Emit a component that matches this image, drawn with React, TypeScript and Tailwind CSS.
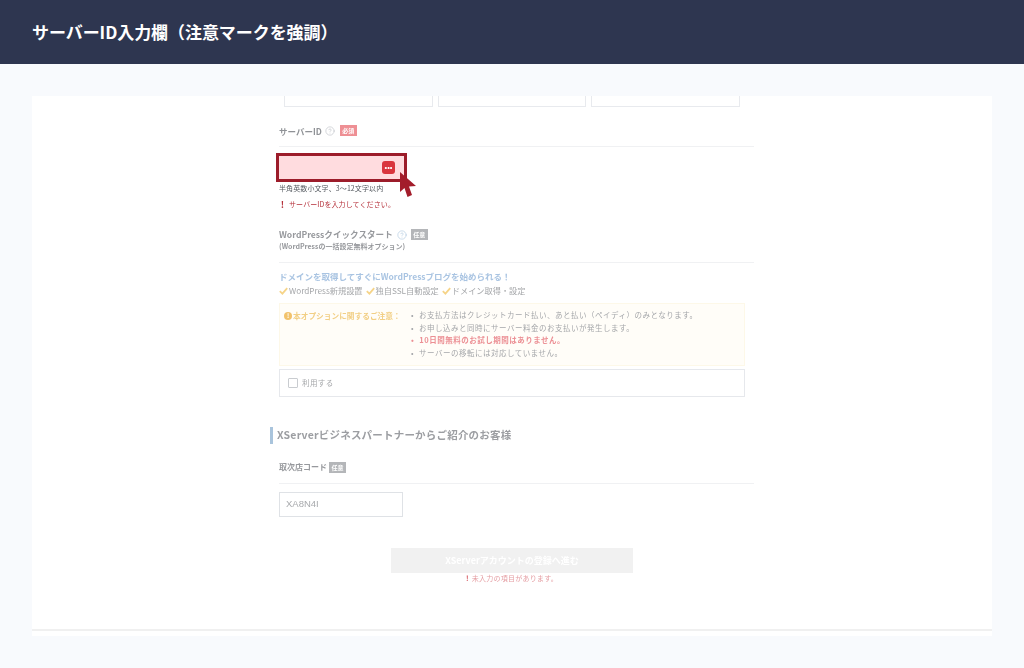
import { HelpCircle } from "lucide-react";

const cjk = "font-['Noto_Sans_CJK_JP','Noto_Sans',sans-serif]";

const Badge = ({ label, color }: { label: string; color: string }) => (
  <span className={`flex h-[11px] w-[17px] items-center justify-center text-[6px] font-bold leading-none text-white ${color}`}>
    {label}
  </span>
);

const Check = () => (
  <svg width="9" height="8" viewBox="0 0 9 8" className="mr-px inline-block">
    <path d="M0.8 4.2 L3.4 6.6 L8.2 1.2" fill="none" stroke="#f6d488" strokeWidth="1.8" />
  </svg>
);

const Alert = () => (
  <span className="w-[7px] text-center text-[9px] font-bold leading-none text-[#b5303a]">!</span>
);

const App = () => {
  return (
    <div className={`flex h-[668px] w-[1024px] flex-col overflow-hidden bg-[#f8fafd] ${cjk}`}>
      <header className="flex h-16 shrink-0 items-center bg-[#2e3650] pl-8">
        <h1 className="text-[17px] font-bold tracking-[-0.06px] text-white">サーバーID入力欄（注意マークを強調）</h1>
      </header>

      <main className="mx-8 mt-8 h-[540px] bg-white blur-[0.4px]">
        <div className="relative ml-[247px] h-[533px] w-[475px]">
          <div className="flex gap-[5px] pl-[5px]">
            <div className="h-[11px] w-[149px] border border-t-0 border-[#e8eaee]" />
            <div className="h-[11px] w-[148px] border border-t-0 border-[#e8eaee]" />
            <div className="h-[11px] w-[149px] border border-t-0 border-[#e8eaee]" />
          </div>

          <div className="mt-[15px] flex h-[25px] items-start gap-[3px] border-b border-[#f0f1f3]">
            <span className="text-[8.5px] font-bold leading-[18px] text-[#8f9296]">サーバーID</span>
            <HelpCircle size={10} className="mt-1 text-[#b8bcc2]" strokeWidth={1.4} />
            <span className="ml-[2px] mt-[3px]"><Badge label="必須" color="bg-[#ee8f94]" /></span>
          </div>

          <div className="relative ml-[-3px] mt-[6px] flex h-[29px] w-[131px] items-center justify-end border-[3px] border-[#9c1c2a] bg-[#ffdcdf] pr-[9px]">
            <span className="flex h-[13px] w-[13px] items-center justify-center rounded-[3px] bg-[#d9363e] text-[7px] font-bold leading-none text-white">•••</span>
            <svg width="18" height="26" viewBox="0 0 18 26" className="absolute left-[120px] top-[16px]">
              <path d="M1 0 L1 20 L5.5 16 L8.5 25 L13 23 L10 14.5 L17 14 Z" fill="#a31d2b" />
            </svg>
          </div>

          <p className="mt-px text-[7px] leading-[11px] tracking-[0.1px] text-[#555a60]">半角英数小文字、3〜12文字以内</p>
          <p className="mt-[5px] flex items-center gap-[3px] text-[7px] leading-[11px] tracking-[0.1px] text-[#b5303a]">
            <Alert />
            サーバーIDを入力してください。
          </p>

          <div className="mt-[18px] h-[35px] border-b border-[#f0f1f3]">
            <div className="flex h-[13px] items-center gap-[4px]">
              <span className="text-[8.6px] font-bold leading-none text-[#97999d]">WordPressクイックスタート</span>
              <HelpCircle size={10} className="text-[#a9c4dd]" strokeWidth={1.4} />
              <Badge label="任意" color="bg-[#b4b6b9]" />
            </div>
            <p className="text-[7px] font-bold leading-[11px] text-[#97999d]">(WordPressの一括設定無料オプション)</p>
          </div>

          <p className="mt-[7px] text-[8.5px] font-bold leading-[13px] text-[#a9c4e2]">ドメインを取得してすぐにWordPressブログを始められる！</p>
          <p className="mt-px flex items-center text-[8.2px] leading-[13px] text-[#a5a7aa]">
            <Check />WordPress新規設置
            <span className="w-[3px]" /><Check />独自SSL自動設定
            <span className="w-[3px]" /><Check />ドメイン取得・設定
          </p>

          <div className="mt-[6px] flex h-[63px] w-[466px] border border-[#fdf8e8] bg-[#fffdf8] pl-1 pt-[5px]">
            <p className="flex h-[13px] w-[127px] items-center gap-px text-[7.7px] font-bold leading-none text-[#f2cf85]">
              <span className="flex h-2 w-2 items-center justify-center rounded-full bg-[#f2c26b] text-[6px] text-white">!</span>
              本オプションに関するご注意：
            </p>
            <ul className="text-[7.5px] leading-[12.6px] tracking-[0.5px] text-[#a5a7aa]">
              <li className="flex gap-[5px]"><span>•</span>お支払方法はクレジットカード払い、あと払い（ペイディ）のみとなります。</li>
              <li className="flex gap-[5px]"><span>•</span>お申し込みと同時にサーバー料金のお支払いが発生します。</li>
              <li className="flex gap-[5px] font-bold text-[#ec8f94]"><span>•</span>10日間無料のお試し期間はありません。</li>
              <li className="flex gap-[5px]"><span>•</span>サーバーの移転には対応していません。</li>
            </ul>
          </div>

          <label className="mt-[3px] flex h-[28px] w-[466px] items-center gap-[4px] border border-[#e6e8ec] pl-2">
            <span className="h-[10px] w-[10px] rounded-[1px] border border-[#c9ccd0]" />
            <span className="text-[7.5px] leading-none tracking-[0.4px] text-[#a5a7aa]">利用する</span>
          </label>

          <h2 className="ml-[-9px] mt-[30px] flex h-[17px] items-center border-l-[3px] border-[#a9c4dc] pl-[4px] text-[10.5px] font-bold leading-none tracking-[0.2px] text-[#9c9ea2]">
            XServerビジネスパートナーからご紹介のお客様
          </h2>

          <div className="mt-[16px] flex h-[24px] items-start gap-[2px] border-b border-[#f0f1f3]">
            <span className="text-[8px] font-bold leading-[14px] text-[#97999d]">取次店コード</span>
            <span className="mt-[2px]"><Badge label="任意" color="bg-[#b4b6b9]" /></span>
          </div>

          <div className="mt-2 flex h-[25px] w-[124px] items-center border border-[#dfe2e6] pl-[6px] font-['Liberation_Sans',sans-serif] text-[9.5px] text-[#a8aaad]">
            XA8N4I
          </div>

          <button className="ml-[112px] mt-[31px] flex h-[25px] w-[242px] items-center justify-center bg-[#f1f1f1] text-[9px] font-bold text-white">
            XServerアカウントの登録へ進む
          </button>
          <p className="ml-[112px] flex w-[242px] items-center justify-center gap-[3px] text-[7px] leading-[11px] tracking-[0.25px] text-[#e59ea3]">
            <span className="font-bold text-[#d5545c]">!</span> 未入力の項目があります。
          </p>
        </div>
        <div className="h-[2px] bg-[#f0f0f0]" />
      </main>
    </div>
  );
};

export default App;
